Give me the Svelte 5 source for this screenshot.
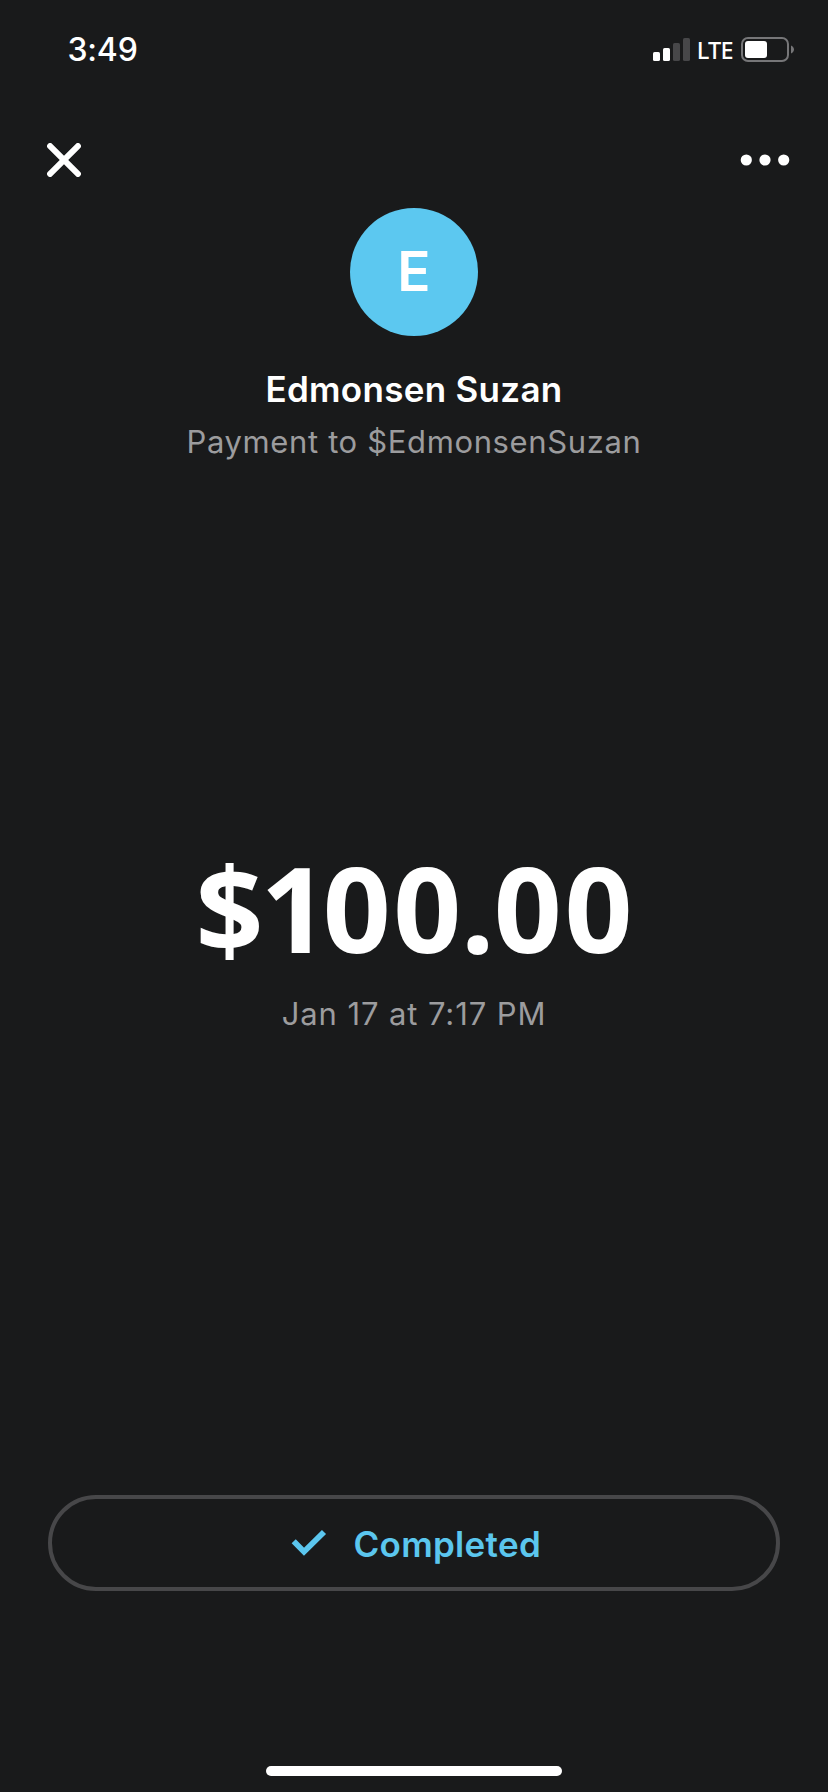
<script>
  const payment = {
    initial: 'E',
    name: 'Edmonsen Suzan',
    note: 'Payment to $EdmonsenSuzan',
    date: 'Jan 17 at 7:17 PM',
    status: 'Completed'
  };

  // Amount glyphs paired with their tracking in pixels.
  const amount = [
    ['$', -3.2],
    ['1', -5.7],
    ['0', 2.5],
    ['0', -0.7],
    ['.', -0.7],
    ['0', 2.5],
    ['0', 0]
  ];
</script>

<main class="screen">
  <header class="status-bar">
    <span class="time">3:49</span>
    <div class="indicators">
      <svg class="signal" width="37" height="23" viewBox="0 0 37 23" aria-hidden="true">
        <rect x="0" y="14" width="7" height="9" rx="1.6" fill="#fff" />
        <rect x="10" y="10" width="7" height="13" rx="1.6" fill="#fff" />
        <rect x="20" y="5" width="7" height="18" rx="1.6" fill="#474749" />
        <rect x="30" y="0" width="7" height="23" rx="1.6" fill="#474749" />
      </svg>
      <span class="network">LTE</span>
      <svg class="battery" width="54" height="25" viewBox="0 0 54 25" aria-hidden="true">
        <rect x="1" y="1" width="46" height="23" rx="6" fill="none" stroke="#767678" stroke-width="2" />
        <rect x="4" y="4" width="22" height="17" rx="3" fill="#fff" />
        <path d="M50 8.5C54 10.5 54 14.5 50 16.5Z" fill="#767678" />
      </svg>
    </div>
  </header>

  <nav class="actions">
    <button aria-label="Close">
      <svg width="34" height="34" viewBox="0 0 34 34">
        <path d="M3.1 3.1L30.9 30.9M30.9 3.1L3.1 30.9" fill="none" stroke="#fff" stroke-width="6" stroke-linecap="round" />
      </svg>
    </button>
    <button aria-label="More">
      <svg width="50" height="12" viewBox="0 0 50 12">
        <circle cx="6.3" cy="6" r="5.6" fill="#fff" />
        <circle cx="25" cy="6" r="5.6" fill="#fff" />
        <circle cx="43.7" cy="6" r="5.6" fill="#fff" />
      </svg>
    </button>
  </nav>

  <section class="recipient">
    <div class="avatar">{payment.initial}</div>
    <h1>{payment.name}</h1>
    <p class="note">{payment.note}</p>
  </section>

  <section class="summary">
    <div class="amount">{#each amount as [glyph, tracking]}<span style="letter-spacing:{tracking}px">{glyph}</span>{/each}</div>
    <p class="date">{payment.date}</p>
  </section>

  <button class="completed">
    <svg width="36" height="28" viewBox="0 0 36 28" aria-hidden="true">
      <path d="M2.7 12.3L13 22.7L33 3" fill="none" stroke="#5bc6ee" stroke-width="5.8" />
    </svg>
    <span>{payment.status}</span>
  </button>

  <div class="home-indicator"></div>
</main>

<style>
  :global(body) {
    background: #191a1b;
  }

  .screen {
    box-sizing: border-box;
    display: flex;
    flex-direction: column;
    height: 1792px;
    background: #191a1b;
    color: #fff;
    font-family: Inter, sans-serif;
  }

  h1,
  p {
    margin: 0;
  }

  button {
    padding: 0;
    border: 0;
    background: none;
    color: inherit;
    font: inherit;
  }

  button svg {
    display: block;
  }

  .status-bar {
    display: flex;
    align-items: center;
    justify-content: space-between;
    height: 99px;
    padding: 0 33px 0 67.5px;
  }

  .time {
    font-size: 32px;
    font-weight: 550;
    line-height: 40px;
    letter-spacing: -0.2px;
  }

  .indicators {
    display: flex;
    align-items: center;
  }

  .network {
    margin: 0 8px 0 7px;
    font: 500 23.5px/30px 'Noto Sans', sans-serif;
    letter-spacing: -0.7px;
  }

  .actions {
    display: flex;
    align-items: center;
    justify-content: space-between;
    height: 96px;
    padding: 13px 38.5px 0 47px;
  }

  .recipient,
  .summary {
    display: flex;
    flex-direction: column;
    align-items: center;
    text-align: center;
    white-space: nowrap;
  }

  .avatar {
    box-sizing: border-box;
    display: flex;
    align-items: center;
    justify-content: center;
    width: 128px;
    height: 128px;
    padding-bottom: 3px;
    border-radius: 50%;
    background: #5cc8f0;
    font-size: 55px;
    font-weight: 640;
    line-height: 60px;
  }

  h1 {
    margin-top: 28px;
    font-size: 35px;
    font-weight: 600;
    line-height: 50px;
    letter-spacing: 0.3px;
  }

  .note,
  .date {
    color: #9c9c9e;
    font-size: 31px;
    font-weight: 400;
    line-height: 46px;
    font-feature-settings: 'calt' 0;
  }

  .note {
    margin-top: 5px;
    letter-spacing: 0.64px;
  }

  .summary {
    margin-top: 382px;
  }

  .amount {
    font: 680 119px/120px 'Open Sans', sans-serif;
  }

  .date {
    margin-top: 24px;
    letter-spacing: 0.9px;
  }

  .completed {
    box-sizing: border-box;
    display: flex;
    align-items: center;
    justify-content: center;
    gap: 26.5px;
    height: 96px;
    margin: 458px 48px 0;
    padding-left: 4px;
    border: 4px solid #474749;
    border-radius: 48px;
    color: #5bc6ee;
    font-size: 35px;
    font-weight: 600;
    line-height: 44px;
    letter-spacing: 0.3px;
  }

  .completed svg {
    margin-bottom: 1px;
  }

  .completed span {
    padding-top: 2px;
  }

  .home-indicator {
    width: 296px;
    height: 10px;
    margin: auto auto 16px;
    border-radius: 5px;
    background: #fff;
  }
</style>
